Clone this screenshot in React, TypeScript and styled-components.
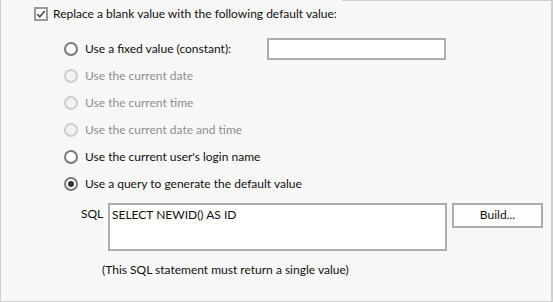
import styled, { createGlobalStyle } from "styled-components"

const Global = createGlobalStyle`
  html, body {
    margin: 0;
    padding: 0;
    background: #f7f7f7;
  }
  * { box-sizing: border-box; }
`

const options = [
  { id: "fixed", text: "Use a fixed value (constant):", disabled: false, withInput: true },
  { id: "date", text: "Use the current date", disabled: true },
  { id: "time", text: "Use the current time", disabled: true },
  { id: "datetime", text: "Use the current date and time", disabled: true },
  { id: "user", text: "Use the current user's login name", disabled: false },
  { id: "query", text: "Use a query to generate the default value", disabled: false },
]

function CheckMark() {
  return (
    <svg width="14" height="14" viewBox="0 0 14 14">
      <rect x="1" y="1" width="12" height="12" fill="#fff" stroke="#9a9a9a" strokeWidth="2" />
      <path d="M3.2 7.2 L5.8 9.8 L10.8 4" fill="none" stroke="#4a4a4a" strokeWidth="1.6" />
    </svg>
  )
}

export default function App() {
  const selected = "query"

  return (
    <>
      <Global />
      <Frame>
        <Header>
          <Legend>
            <CheckMark />
            <span>Replace a blank value with the following default value:</span>
          </Legend>
          <Line />
        </Header>

        <Options>
          {options.map(o => (
            <Row key={o.id}>
              <Choice $disabled={o.disabled} $wide={!!o.withInput}>
                <Radio $disabled={o.disabled} $checked={o.id === selected} />
                <span>{o.text}</span>
              </Choice>
              {o.withInput && <TextBox type="text" defaultValue="" />}
            </Row>
          ))}
        </Options>

        <SqlRow>
          <SqlLabel>SQL</SqlLabel>
          <SqlBox defaultValue="SELECT NEWID() AS ID" />
          <Button type="button">Build...</Button>
        </SqlRow>

        <Note>(This SQL statement must return a single value)</Note>
      </Frame>
    </>
  )
}

//style

const Frame = styled.div`
  width: 553px;
  height: 302px;
  border-left: 1px solid #cfcfcf;
  border-right: 2px solid #cfcfcf;
  border-bottom: 1px solid #cfcfcf;
  background: #f7f7f7;
  font-family: Lato, "Noto Sans", sans-serif;
  font-size: 12px;
  color: #111;
`
const Header = styled.div`
  display: flex;
  align-items: flex-start;
  height: 27px;
`
const Legend = styled.label`
  display: flex;
  align-items: center;
  gap: 5px;
  height: 27px;
  margin-left: 33px;
  padding-right: 5px;
`
const Line = styled.div`
  flex: 1;
  border-top: 1px solid #cfcfcf;
`
const Options = styled.div`
  display: flex;
  flex-direction: column;
  margin-top: 8px;
  padding-left: 63px;
`
const Row = styled.div`
  display: flex;
  align-items: center;
  height: 27px;
`
const Choice = styled.label<{ $disabled?: boolean; $wide?: boolean }>`
  display: flex;
  align-items: center;
  gap: 7px;
  width: ${p => (p.$wide ? "203px" : "auto")};
  color: ${p => (p.$disabled ? "#8f8f8f" : "#111")};
`
const Radio = styled.span<{ $disabled?: boolean; $checked?: boolean }>`
  position: relative;
  width: 14px;
  height: 14px;
  border-radius: 50%;
  border: 2px solid ${p => (p.$disabled ? "#cdcdcd" : "#7a7a7a")};
  background: ${p => (p.$disabled ? "#f3f3f3" : "#fff")};
  &::after {
    content: "";
    display: ${p => (p.$checked ? "block" : "none")};
    position: absolute;
    left: 2px;
    top: 2px;
    width: 6px;
    height: 6px;
    border-radius: 50%;
    background: #333;
  }
`
const TextBox = styled.input`
  width: 179px;
  height: 22px;
  border: 2px solid #adadad;
  background: #fff;
  outline: none;
`
const SqlRow = styled.div`
  display: flex;
  align-items: flex-start;
  margin-top: 6px;
  padding-left: 80px;
`
const SqlLabel = styled.span`
  width: 27px;
  padding-top: 3px;
`
const SqlBox = styled.textarea`
  width: 339px;
  height: 48px;
  border: 2px solid #adadad;
  background: #fff;
  padding: 2px 2px;
  font: inherit;
  color: #111;
  resize: none;
  outline: none;
`
const Button = styled.button`
  width: 91px;
  height: 25px;
  margin-left: 5px;
  border: 2px solid #adadad;
  background: #fdfdfd;
  font: inherit;
  color: #111;
  padding: 0 0 2px;
`
const Note = styled.div`
  margin-top: 11px;
  padding-left: 101px;
`
